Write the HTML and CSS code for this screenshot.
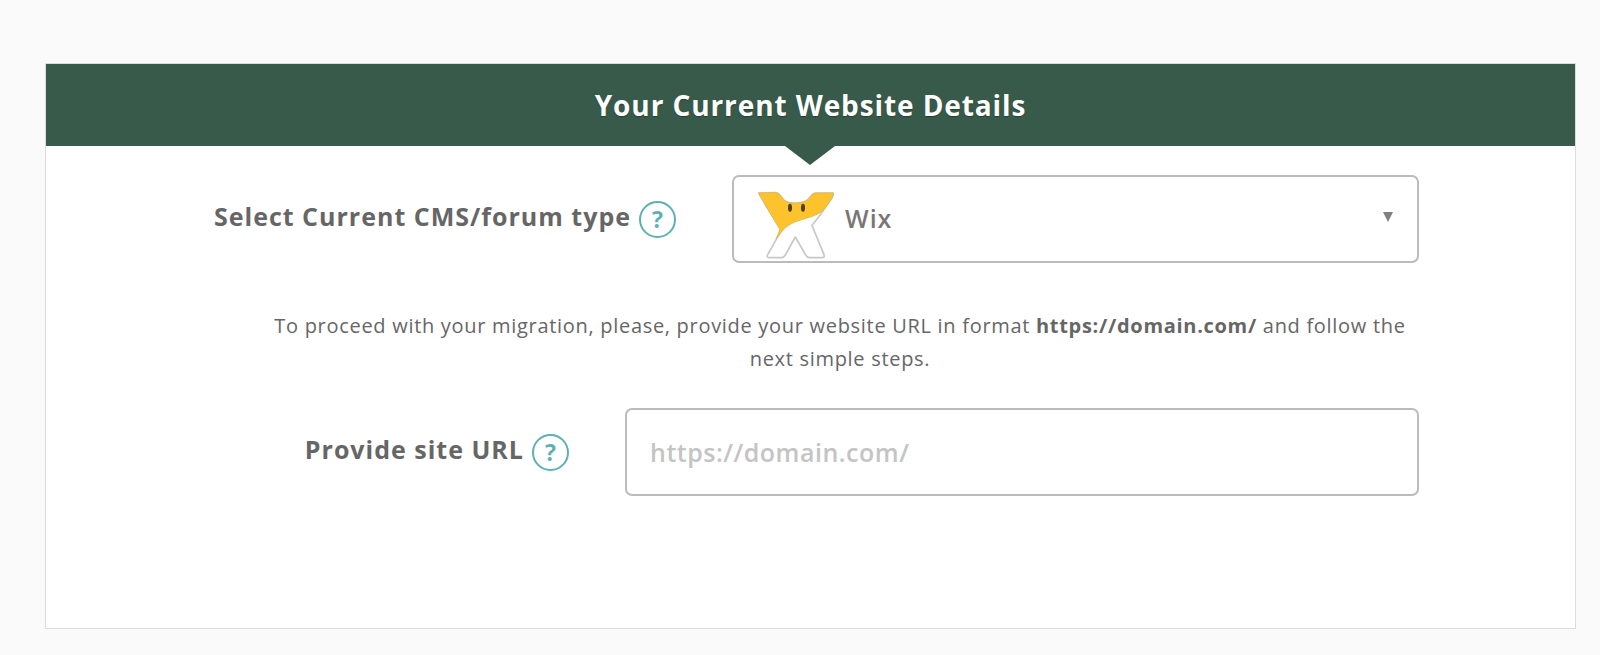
FILE: index.html
```html
<!DOCTYPE html>
<html lang="en">
<head>
    <meta charset="UTF-8">
    <title>Your Current Website Details</title>
    <link rel="stylesheet" href="styles.css">
</head>
<body>
    <div class="panel">
        <div class="panel-head">
            <h2>Your Current Website Details</h2>
        </div>

        <div class="form-row row-cms">
            <label class="field-label"><span class="label-text">Select Current CMS/forum type</span> <span class="help">?</span></label>
            <div class="select-box">
                <svg class="wix-logo" viewBox="0 0 270 228" width="90" height="76">
                    <path d="M20 18 L72 17 C80 18 84 24 90 32 C95 40 102 45 112 47 C130 50 150 48 162 42 C172 36 176 26 184 20 C188 18 192 18 196 18 L244 18 C246 24 238 36 232 44 L200 90 L180 115 L216 203 C218 209 216 212 210 212 L172 212 C166 212 164 208 161 204 L130 150 L100 204 C97 209 94 212 88 212 L52 212 C46 212 44 208 47 203 L88 130 L45 62 Z" fill="#fff" stroke="#c8c8c8" stroke-width="5" stroke-linejoin="round"/>
                    <path d="M20 18 L72 17 C80 18 84 24 90 32 C95 40 102 45 112 47 C130 50 150 48 162 42 C172 36 176 26 184 20 C188 18 192 18 196 18 L244 18 C246 24 238 36 232 44 C222 62 212 74 195 82 C170 94 130 100 108 116 C92 128 82 142 72 156 C76 146 80 138 84 128 L45 62 Z" fill="#fcc32c" stroke="#e3bb50" stroke-width="3" stroke-linejoin="round"/>
                    <ellipse cx="114" cy="62" rx="6" ry="12" fill="#4f3f1c"/>
                    <ellipse cx="153" cy="62" rx="6" ry="12" fill="#4f3f1c"/>
                </svg>
                <span class="select-value">Wix</span>
                <span class="select-arrow"></span>
            </div>
        </div>

        <p class="note">To proceed with your migration, please, provide your website URL in format <b>https://domain.com/</b> and follow the next simple steps.</p>

        <div class="form-row row-url">
            <label class="field-label" for="site_url"><span class="label-text">Provide site URL</span> <span class="help">?</span></label>
            <input class="url-input" type="text" id="site_url" placeholder="https://domain.com/">
        </div>
    </div>
</body>
</html>
```

FILE: styles.css
```css
body {
    margin: 0;
    padding: 63px 24px 26px 45px;
    background-color: #fafafa;
    font-family: "Open Sans", sans-serif;
    color: #666;
}
.panel {
    height: 564px;
    background-color: #fff;
    border: 1px solid #dcdcdc;
}
.panel-head {
    position: relative;
    height: 82px;
    background-color: #385a4b;
    display: flex;
    align-items: center;
    justify-content: center;
}
.panel-head:after {
    content: "";
    position: absolute;
    left: 50%;
    bottom: -19px;
    margin-left: -26px;
    border-top: 19px solid #385a4b;
    border-left: 25px solid transparent;
    border-right: 25px solid transparent;
}
.panel-head h2 {
    margin: 0;
    font-size: 28px;
    font-weight: 700;
    letter-spacing: 0.9px;
    color: #fff;
    text-shadow: 0 1px 1px rgba(0, 0, 0, 0.3);
}
.form-row {
    display: flex;
    justify-content: flex-end;
    align-items: center;
    gap: 56px;
    padding-right: 156px;
}
.row-cms {
    margin-top: 29px;
}
.row-url {
    margin-top: 33px;
}
.field-label {
    font-size: 25px;
    font-weight: 700;
    letter-spacing: 1px;
    display: flex;
    align-items: center;
    gap: 8px;
}
.label-text {
    margin-bottom: 6px;
}
.help {
    width: 33px;
    height: 33px;
    border: 2px solid #5fb0b5;
    border-radius: 50%;
    color: #5fb0b5;
    font-size: 23px;
    letter-spacing: 0;
    display: flex;
    align-items: center;
    justify-content: center;
}
.select-box {
    position: relative;
    width: 687px;
    height: 88px;
    box-sizing: border-box;
    border: 2px solid #bbb;
    border-radius: 7px;
    display: flex;
    align-items: center;
    padding-left: 18px;
}
.wix-logo {
    margin-top: 12px;
}
.select-value {
    margin-left: 3px;
    margin-bottom: 2px;
    font-size: 25px;
    font-weight: 600;
    letter-spacing: 1px;
    color: #777;
}
.select-arrow {
    position: absolute;
    right: 24px;
    top: 35px;
    border-top: 10px solid #808080;
    border-left: 5px solid transparent;
    border-right: 5px solid transparent;
}
.note {
    width: 1160px;
    margin: 46px 0 0 214px;
    font-size: 20px;
    line-height: 33px;
    letter-spacing: 0.7px;
    text-align: center;
}
.url-input {
    width: 794px;
    height: 88px;
    box-sizing: border-box;
    border: 2px solid #bbb;
    border-radius: 7px;
    padding: 0 23px;
    font-family: "Open Sans", sans-serif;
    font-size: 25px;
    font-weight: 600;
    letter-spacing: 0.5px;
    outline: none;
}
.url-input::placeholder {
    color: #c4c4c4;
}
```
